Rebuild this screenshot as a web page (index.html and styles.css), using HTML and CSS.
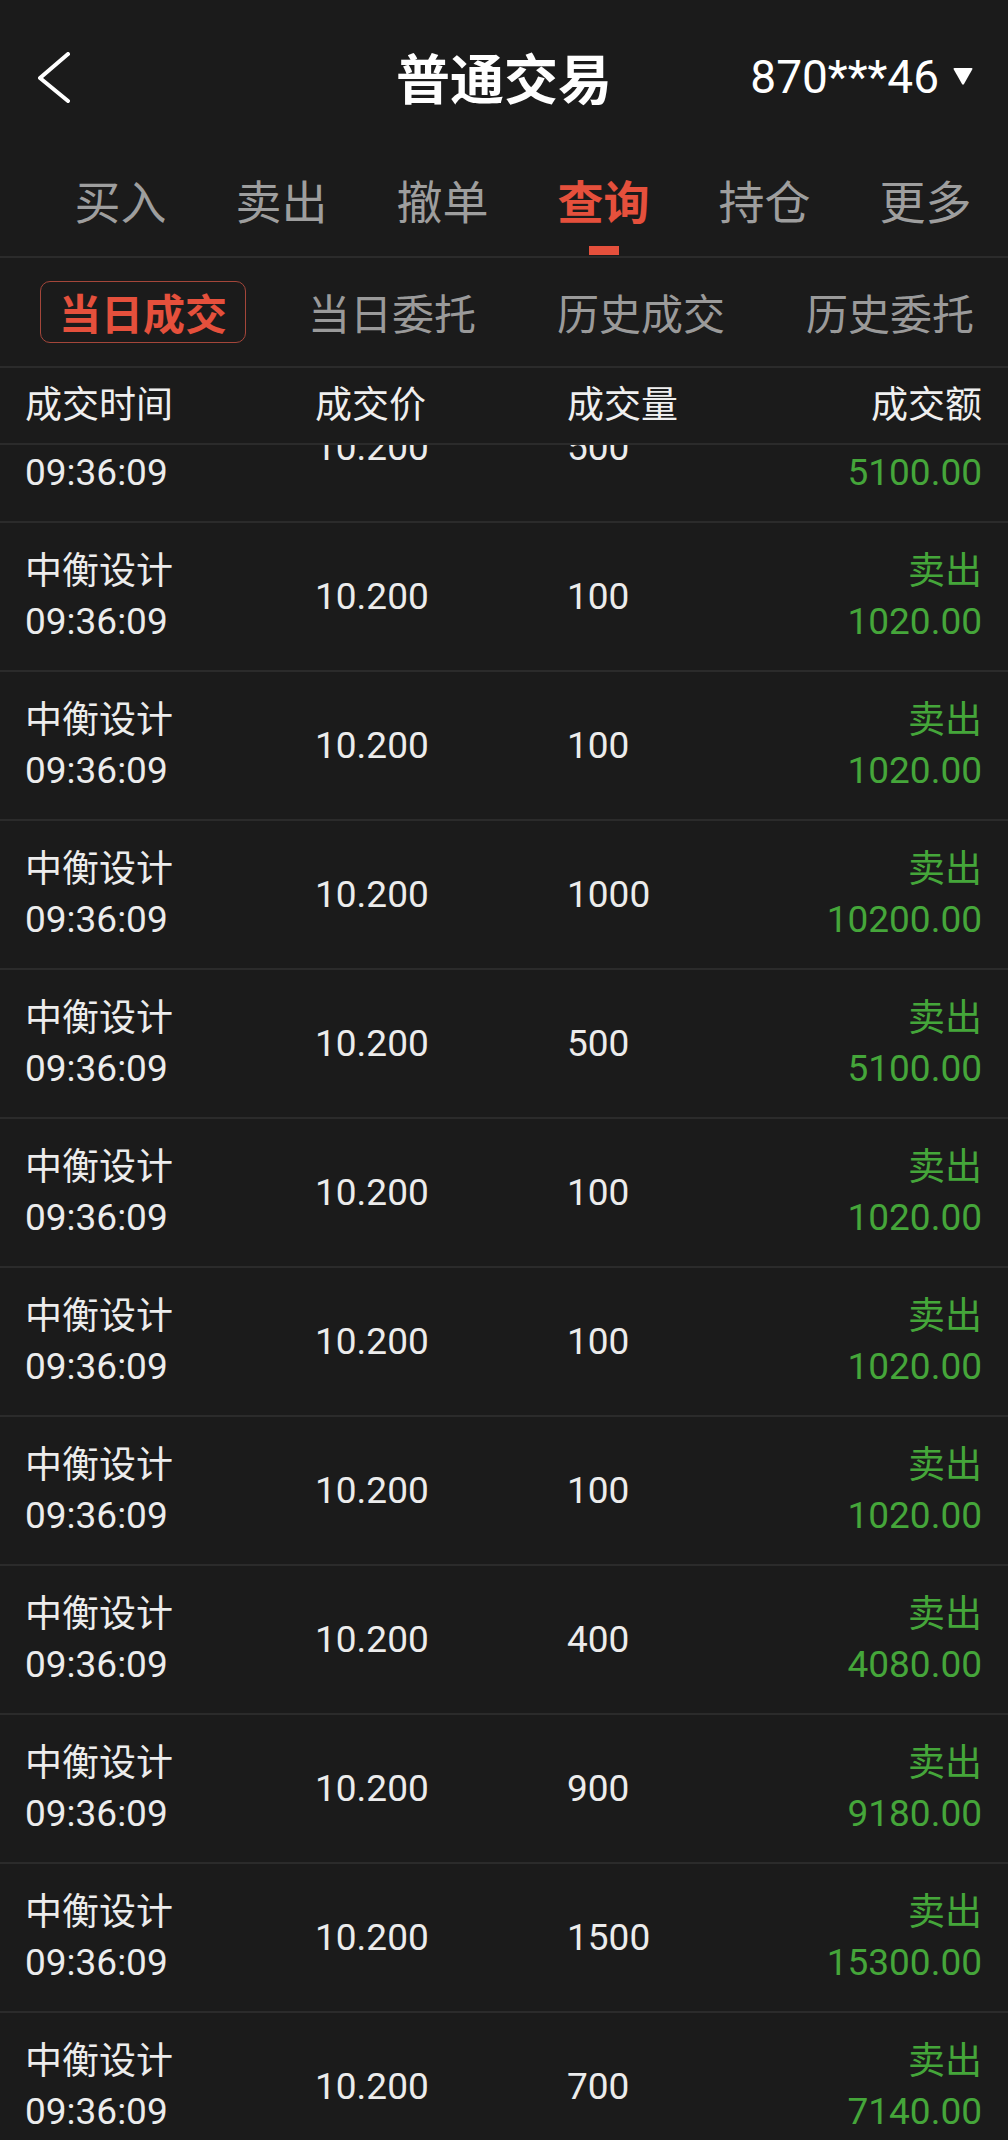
FILE: index.html
```html
<!DOCTYPE html>
<html lang="zh-CN">
<head>
<meta charset="utf-8">
<title>普通交易</title>
<link rel="stylesheet" href="styles.css">
</head>
<body>
<div class="page">
  <header class="navbar">
    <svg class="back" viewBox="0 0 32 52" aria-hidden="true"><polyline points="30,2 2,26 30,49" fill="none" stroke="#fff" stroke-width="4" stroke-linecap="round" stroke-linejoin="round"/></svg>
    <div class="title">普通交易</div>
    <div class="account"><span>870***46</span><svg viewBox="0 0 20 18" aria-hidden="true"><path d="M1.5 1 H18.5 Q20 1 19.2 2.5 L11 17 Q10 18.5 9 17 L0.8 2.5 Q0 1 1.5 1 Z" fill="#fff"/></svg></div>
  </header>
  <nav class="tabs">
    <div class="tab"><span>买入</span></div>
    <div class="tab"><span>卖出</span></div>
    <div class="tab"><span>撤单</span></div>
    <div class="tab active"><span>查询</span><i class="bar"></i></div>
    <div class="tab"><span>持仓</span></div>
    <div class="tab"><span>更多</span></div>
  </nav>
  <div class="subtabs">
    <div class="subtab active">当日成交</div>
    <div class="subtab">当日委托</div>
    <div class="subtab">历史成交</div>
    <div class="subtab">历史委托</div>
  </div>
  <div class="thead">
    <div>成交时间</div>
    <div>成交价</div>
    <div>成交量</div>
    <div class="right">成交额</div>
  </div>
  <div class="list-wrap">
    <div class="list">
      <div class="row"><div class="stack"><span>中衡设计</span><span>09:36:09</span></div><div>10.200</div><div>500</div><div class="stack green"><span>卖出</span><span>5100.00</span></div></div>
      <div class="row"><div class="stack"><span>中衡设计</span><span>09:36:09</span></div><div>10.200</div><div>100</div><div class="stack green"><span>卖出</span><span>1020.00</span></div></div>
      <div class="row"><div class="stack"><span>中衡设计</span><span>09:36:09</span></div><div>10.200</div><div>100</div><div class="stack green"><span>卖出</span><span>1020.00</span></div></div>
      <div class="row"><div class="stack"><span>中衡设计</span><span>09:36:09</span></div><div>10.200</div><div>1000</div><div class="stack green"><span>卖出</span><span>10200.00</span></div></div>
      <div class="row"><div class="stack"><span>中衡设计</span><span>09:36:09</span></div><div>10.200</div><div>500</div><div class="stack green"><span>卖出</span><span>5100.00</span></div></div>
      <div class="row"><div class="stack"><span>中衡设计</span><span>09:36:09</span></div><div>10.200</div><div>100</div><div class="stack green"><span>卖出</span><span>1020.00</span></div></div>
      <div class="row"><div class="stack"><span>中衡设计</span><span>09:36:09</span></div><div>10.200</div><div>100</div><div class="stack green"><span>卖出</span><span>1020.00</span></div></div>
      <div class="row"><div class="stack"><span>中衡设计</span><span>09:36:09</span></div><div>10.200</div><div>100</div><div class="stack green"><span>卖出</span><span>1020.00</span></div></div>
      <div class="row"><div class="stack"><span>中衡设计</span><span>09:36:09</span></div><div>10.200</div><div>400</div><div class="stack green"><span>卖出</span><span>4080.00</span></div></div>
      <div class="row"><div class="stack"><span>中衡设计</span><span>09:36:09</span></div><div>10.200</div><div>900</div><div class="stack green"><span>卖出</span><span>9180.00</span></div></div>
      <div class="row"><div class="stack"><span>中衡设计</span><span>09:36:09</span></div><div>10.200</div><div>1500</div><div class="stack green"><span>卖出</span><span>15300.00</span></div></div>
      <div class="row"><div class="stack"><span>中衡设计</span><span>09:36:09</span></div><div>10.200</div><div>700</div><div class="stack green"><span>卖出</span><span>7140.00</span></div></div>
    </div>
  </div>
</div>
</body>
</html>
```

FILE: styles.css
```css
* {
  box-sizing: border-box;
  margin: 0;
  padding: 0;
}

html, body {
  background: #1b1b1b;
}

body {
  font-family: Roboto, "Noto Sans CJK SC", sans-serif;
  color: #ececec;
}

.page {
  width: 1008px;
  height: 2140px;
  display: flex;
  flex-direction: column;
  overflow: hidden;
}

/* top navigation bar */
.navbar {
  height: 154px;
  flex: none;
  display: grid;
  grid-template-columns: 1fr auto 1fr;
  align-items: center;
}

.back {
  display: block;
  width: 32px;
  height: 52px;
  margin-left: 38px;
  margin-top: 1px;
}

.title {
  font-family: "Noto Sans CJK SC", sans-serif;
  font-weight: 700;
  font-size: 54px;
  line-height: 1;
  color: #ffffff;
}

.account {
  justify-self: end;
  margin-right: 35px;
  display: flex;
  align-items: center;
  gap: 14px;
  font-size: 46px;
  line-height: 1;
  color: #ffffff;
}

.account svg {
  display: block;
  width: 20px;
  height: 18px;
  margin-top: -2px;
}

/* main tabs */
.tabs {
  height: 104px;
  flex: none;
  display: flex;
  padding-left: 40px;
  border-bottom: 2px solid #2b2b2b;
}

.tab {
  width: 161px;
  display: flex;
  flex-direction: column;
  align-items: center;
  padding-top: 22px;
  font-family: "Noto Sans CJK SC", sans-serif;
  font-size: 46px;
  line-height: 46px;
  color: #9e9e9e;
}

.tab.active {
  color: #e5503c;
  font-weight: 700;
}

.tab .bar {
  display: block;
  width: 30px;
  height: 9px;
  margin-top: 24px;
  background: #e5503c;
}

/* sub tabs */
.subtabs {
  height: 110px;
  flex: none;
  display: flex;
  align-items: center;
  gap: 43px;
  padding-left: 40px;
  border-bottom: 2px solid #2b2b2b;
}

.subtab {
  width: 206px;
  height: 62px;
  display: flex;
  align-items: center;
  justify-content: center;
  font-family: "Noto Sans CJK SC", sans-serif;
  font-size: 42px;
  line-height: 1;
  color: #9a9a9a;
  border: 1.5px solid transparent;
  border-radius: 10px;
}

.subtab.active {
  color: #e5503c;
  font-weight: 700;
  border-color: #a4463a;
}

/* table */
.thead,
.row {
  display: grid;
  grid-template-columns: 290px 252px 1fr auto;
  align-items: center;
  padding: 0 26px 0 25px;
  border-bottom: 2px solid #2b2b2b;
  font-size: 37px;
}

.thead {
  height: 77px;
  flex: none;
  line-height: 1;
  color: #efefef;
  position: relative;
  z-index: 1;
  background: #1b1b1b;
}

.right {
  text-align: right;
}

.list-wrap {
  flex: 1;
  overflow: hidden;
}

.list {
  margin-top: -71px;
}

.row {
  height: 149px;
  line-height: 50px;
  color: #ececec;
}

.stack {
  display: flex;
  flex-direction: column;
}

.green {
  color: #45a63a;
  align-items: flex-end;
  text-align: right;
}
```
